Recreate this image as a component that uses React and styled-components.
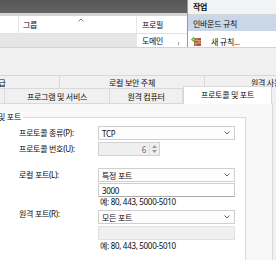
import React from 'react';
import styled, { createGlobalStyle } from 'styled-components';

const GlobalStyle = createGlobalStyle`
  html, body {
    margin: 0;
    padding: 0;
    background: #f0f0f0;
  }
  body {
    font-family: "Noto Sans", "Noto Sans CJK KR", sans-serif;
    font-size: 8px;
    letter-spacing: -0.3px;
    color: #0d0d0d;
  }
`;

const Screen = styled.div`
	width: 276px;
	height: 260px;
	overflow: hidden;
	display: flex;
	flex-direction: column;
`;

/* ---------- console behind the dialog ---------- */

const Console = styled.div`
	height: 47px;
	display: flex;
	flex-shrink: 0;
`;

const ListPane = styled.div`
	width: 187px;
	display: flex;
	flex-direction: column;
	background: #fff;
`;

const TitleStrip = styled.div`
	height: 13px;
	background: linear-gradient(#575757, #636363);
`;

const Band = styled.div`
	height: 3px;
	background: #d4d4d4;
`;

const ListHeader = styled.div`
	height: 17px;
	display: flex;
	border-bottom: 1px solid #e2e2e2;
`;

const HeaderCell = styled.div`
	position: relative;
	width: ${p => p.$w}px;
	display: flex;
	align-items: center;
	padding-left: ${p => p.$pad || 0}px;
	box-sizing: border-box;
	border-right: ${p => (p.$last ? 'none' : '1px solid #e6e6e6')};
	line-height: 17px;
`;

const SortCaret = styled.svg`
	position: absolute;
	top: 2px;
	left: 59px;
`;

const ListRow = styled.div`
	height: 13px;
	display: flex;
`;

const RowCell = styled.div`
	width: ${p => p.$w}px;
	background: ${p => (p.$shade ? '#e6e6e6' : '#fff')};
	display: flex;
	align-items: center;
	padding-left: ${p => p.$pad || 0}px;
	box-sizing: border-box;
`;

const Tick = styled.span`
	width: 1px;
	height: 3px;
	background: #9c9c9c;
	margin: 6px 8px 0 auto;
`;

const ActionsPane = styled.div`
	flex: 1;
	border-left: 1px solid #9a9a9a;
	background: #fff;
	display: flex;
	flex-direction: column;
`;

const ActionsHeader = styled.div`
	height: 14px;
	line-height: 14px;
	padding-left: 5px;
	background: #f2f3f5;
	border-bottom: 1px solid #d6d6d6;
	font-weight: 700;
`;

const ActionItem = styled.div`
	height: ${p => p.$h}px;
	display: flex;
	align-items: center;
	gap: 10px;
	padding: ${p => p.$top || 0}px 0 0 ${p => p.$pad || 5}px;
	box-sizing: border-box;
	background: ${p => (p.$active ? '#cad7e6' : '#fff')};
`;

/* ---------- properties dialog ---------- */

const Dialog = styled.div`
	flex: 1;
	display: flex;
	flex-direction: column;
	background: #f0f0f0;
	border-top: 1px solid #d2d2d2;
	padding-top: 27px;
`;

const TabRow = styled.div`
	display: flex;
	align-items: flex-end;
	height: ${p => p.$h}px;
	margin-left: ${p => p.$shift}px;
	flex-shrink: 0;
`;

const Tab = styled.div`
	width: ${p => p.$w}px;
	flex-shrink: 0;
	height: 100%;
	box-sizing: border-box;
	display: flex;
	align-items: center;
	justify-content: center;
	white-space: nowrap;
	background: #f0f0f0;
	border-top: 1px solid #d9d9d9;
	border-right: 1px solid #d9d9d9;
`;

const ActiveTab = styled(Tab)`
	position: relative;
	z-index: 1;
	height: calc(100% + 3px);
	margin-bottom: -1px;
	padding-bottom: 2px;
	background: #fff;
	border-left: 1px solid #d9d9d9;
`;

const Page = styled.div`
	flex: 1;
	margin-left: -60px;
	width: 333px;
	box-sizing: border-box;
	background: #f8f8f8;
	border: 1px solid #d9d9d9;
	padding: 13px 0 0 8px;
`;

const GroupBox = styled.div`
	width: 297px;
	height: 200px;
	box-sizing: border-box;
	border: 1px solid #dadada;
	background: #fff;
	padding-left: 69px;
`;

const Legend = styled.div`
	width: fit-content;
	margin: -6px 0 0 -53px;
	padding: 0 2px;
	line-height: 9px;
	background: #fff;
	white-space: nowrap;
`;

const Field = styled.div`
	display: flex;
	align-items: flex-start;
	margin-top: ${p => p.$top}px;
`;

const Label = styled.div`
	width: 79px;
	flex-shrink: 0;
	line-height: 14px;
	margin-top: ${p => p.$lift ? -3 : 0}px;
	white-space: nowrap;
`;

const Stack = styled.div`
	width: 137px;
	display: flex;
	flex-direction: column;
`;

const Select = styled.div`
	height: 14px;
	box-sizing: border-box;
	display: flex;
	align-items: center;
	justify-content: space-between;
	padding: 0 4px 0 3px;
	background: #fdfdfd;
	border: 1px solid #cfcfcf;
`;

const TextBox = styled.div`
	height: 14px;
	margin-top: ${p => p.$top || 0}px;
	box-sizing: border-box;
	display: flex;
	align-items: center;
	padding-left: 3px;
	background: ${p => (p.$disabled ? '#f0f0f0' : '#fff')};
	border: 1px solid ${p => (p.$disabled ? '#e2e2e2' : '#cdcdcd')};
	border-bottom-color: ${p => (p.$disabled ? '#e2e2e2' : '#a9a9a9')};
`;

const Hint = styled.div`
	line-height: 9px;
	margin-top: ${p => p.$top || 0}px;
	padding-left: 2px;
	white-space: nowrap;
`;

const Spin = styled.div`
	width: 62px;
	height: 14px;
	box-sizing: border-box;
	display: flex;
	align-items: center;
	justify-content: flex-end;
	background: #efefef;
	border: 1px solid #d2d2d2;
	color: #707070;
`;

const SpinValue = styled.span`
	padding-right: 3px;
`;

const SpinButtons = styled.div`
	width: 9px;
	height: 100%;
	display: flex;
	flex-direction: column;
	align-items: center;
	justify-content: center;
	gap: 2px;
	border-left: 1px solid #e0e0e0;
`;

const Chevron = () => (
	<svg width="6" height="4" viewBox="0 0 6 4">
		<polyline points="0.5,0.5 3,3 5.5,0.5" fill="none" stroke="#555" strokeWidth="0.9" />
	</svg>
);

const Triangle = ({ up }) => (
	<svg width="5" height="3" viewBox="0 0 5 3">
		<polygon points={up ? '0,3 2.5,0 5,3' : '0,0 2.5,3 5,0'} fill="#9a9a9a" />
	</svg>
);

const RuleIcon = () => (
	<svg width="10" height="10" viewBox="0 0 10 10">
		<rect x="3" y="2" width="7" height="8" fill="#b4533a" />
		<path d="M3 4.5h7M3 7h7M6 2v2.5M8 4.5V7M5 7v3" stroke="#e7c9a8" strokeWidth="0.6" />
		<path d="M0 3.5L2.5 1 5 3.5 2.5 6z" fill="#5da23f" />
		<circle cx="2.5" cy="3.5" r="0.9" fill="#e9d36a" />
	</svg>
);

const App = () => (
	<Screen>
		<GlobalStyle />
		<Console>
			<ListPane>
				<TitleStrip />
				<Band />
				<ListHeader>
					<HeaderCell $w={19} />
					<HeaderCell $w={118} $pad={4}>
						그룹
						<SortCaret width="6" height="4" viewBox="0 0 6 4">
							<polyline points="0.5,3.5 3,1 5.5,3.5" fill="none" stroke="#6b6b6b" strokeWidth="0.9" />
						</SortCaret>
					</HeaderCell>
					<HeaderCell $w={50} $pad={5} $last>
						프로필
					</HeaderCell>
				</ListHeader>
				<ListRow>
					<RowCell $w={137} $shade />
					<RowCell $w={50} $pad={5}>
						도메인
						<Tick />
					</RowCell>
				</ListRow>
			</ListPane>
			<ActionsPane>
				<ActionsHeader>작업</ActionsHeader>
				<ActionItem $h={17} $active>
					인바운드 규칙
				</ActionItem>
				<ActionItem $h={16} $top={4} $pad={3}>
					<RuleIcon />새 규칙...
				</ActionItem>
			</ActionsPane>
		</Console>

		<Dialog>
			<TabRow $h={13} $shift={-62}>
				<Tab $w={122}>고급</Tab>
				<Tab $w={145}>로컬 보안 주체</Tab>
				<Tab $w={130}>원격 사용자</Tab>
			</TabRow>
			<TabRow $h={15} $shift={-60}>
				<Tab $w={65} />
				<Tab $w={105}>프로그램 및 서비스</Tab>
				<Tab $w={73}>원격 컴퓨터</Tab>
				<ActiveTab $w={89}>프로토콜 및 포트</ActiveTab>
			</TabRow>
			<Page>
				<GroupBox>
					<Legend>프로토콜 및 포트</Legend>
					<Field $top={5}>
						<Label>프로토콜 종류(P):</Label>
						<Stack>
							<Select>
								TCP
								<Chevron />
							</Select>
						</Stack>
					</Field>
					<Field $top={2}>
						<Label>프로토콜 번호(U):</Label>
						<Spin>
							<SpinValue>6</SpinValue>
							<SpinButtons>
								<Triangle up />
								<Triangle />
							</SpinButtons>
						</Spin>
					</Field>
					<Field $top={12}>
						<Label>로컬 포트(L):</Label>
						<Stack>
							<Select>
								특정 포트
								<Chevron />
							</Select>
							<TextBox $top={1}>3000</TextBox>
							<Hint>예: 80, 443, 5000-5010</Hint>
						</Stack>
					</Field>
					<Field $top={4}>
						<Label $lift>원격 포트(R):</Label>
						<Stack>
							<Select>
								모든 포트
								<Chevron />
							</Select>
							<TextBox $top={2} $disabled />
							<Hint $top={1}>예: 80, 443, 5000-5010</Hint>
						</Stack>
					</Field>
				</GroupBox>
			</Page>
		</Dialog>
	</Screen>
);

export default App;
